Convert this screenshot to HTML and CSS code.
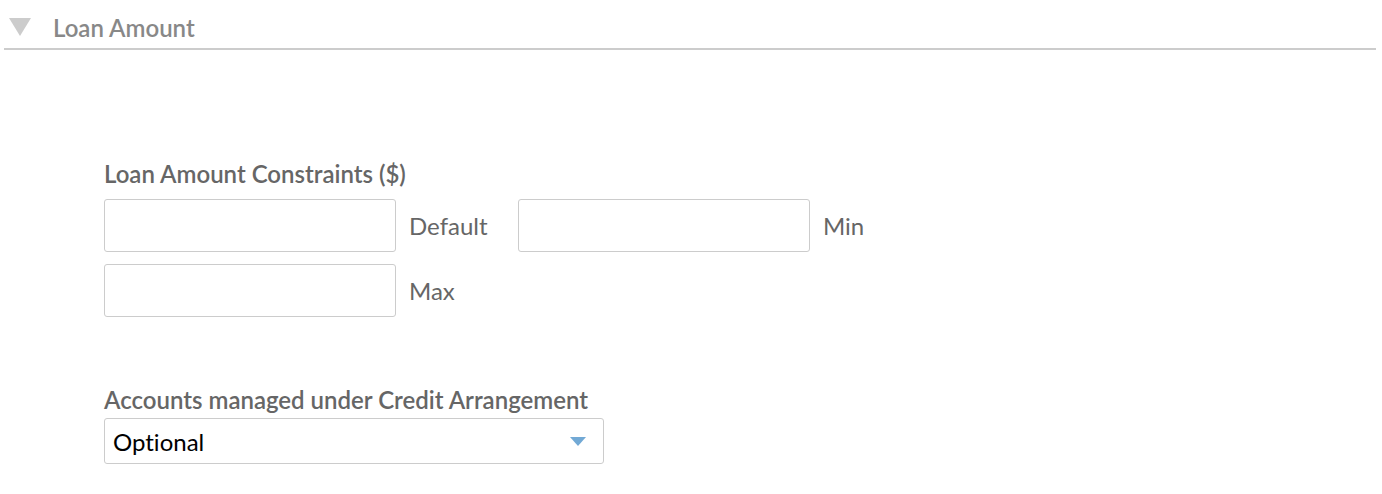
FILE: index.html
```html
<!DOCTYPE html>
<html lang="en">

<head>
    <meta charset="UTF-8">
    <title>Loan Amount</title>
    <link rel="stylesheet" href="styles.css">
</head>

<body>

    <div class="section-header">
        <span class="caret"></span>
        <span class="section-title">Loan Amount</span>
    </div>

    <div class="section-body">
        <div class="field-group">
            <label class="group-label">Loan Amount Constraints ($)</label>
            <div class="input-row">
                <div class="input-pair">
                    <input type="text" id="amount-default">
                    <label for="amount-default">Default</label>
                </div>
                <div class="input-pair">
                    <input type="text" id="amount-min">
                    <label for="amount-min">Min</label>
                </div>
            </div>
            <div class="input-row">
                <div class="input-pair">
                    <input type="text" id="amount-max">
                    <label for="amount-max">Max</label>
                </div>
            </div>
        </div>

        <div class="field-group select-group">
            <label class="group-label" for="credit-arrangement">Accounts managed under Credit Arrangement</label>
            <div class="select-box">
                <span id="credit-arrangement">Optional</span>
                <span class="select-arrow"></span>
            </div>
        </div>
    </div>

</body>

</html>
```

FILE: styles.css
```css
body {
    margin: 0;
    font-family: Lato, "Open Sans", sans-serif;
    font-variant-ligatures: none;
    background-color: #fff;
    color: #666;
}

/* Section header */
.section-header {
    display: flex;
    align-items: center;
    height: 50px;
    margin: 0 6px 0 4px;
    border-bottom: 2px solid #ccc;
    box-sizing: border-box;
    padding-top: 6px;
}

.caret {
    width: 0;
    height: 0;
    margin-left: 5px;
    border-left: 11px solid transparent;
    border-right: 11px solid transparent;
    border-top: 18px solid #ccc;
}

.section-title {
    margin-left: 22px;
    font-size: 24px;
    font-weight: 600;
    color: #888;
}

/* Body */
.section-body {
    padding: 110px 0 0 104px;
}

.group-label {
    display: block;
    font-size: 24px;
    font-weight: 600;
    color: #666;
    line-height: 28px;
    margin-bottom: 11px;
}

.input-row {
    display: flex;
    margin-bottom: 12px;
}

.input-pair {
    display: flex;
    align-items: center;
    width: 414px;
}

.input-pair input {
    width: 292px;
    height: 53px;
    box-sizing: border-box;
    border: 1px solid #ccc;
    border-radius: 3px;
    margin: 0;
    padding: 0 8px;
    font-family: inherit;
    font-size: 24px;
}

.input-pair label {
    margin-left: 13px;
    font-size: 24px;
    color: #666;
}

.select-group {
    margin-top: 69px;
}

.select-group .group-label {
    margin-bottom: 4px;
}

.select-box {
    display: flex;
    align-items: center;
    justify-content: space-between;
    width: 500px;
    height: 46px;
    box-sizing: border-box;
    border: 1px solid #ccc;
    border-radius: 3px;
    padding: 0 17px 0 8px;
    font-size: 24px;
    color: #000;
}

.select-arrow {
    width: 0;
    height: 0;
    border-left: 8px solid transparent;
    border-right: 8px solid transparent;
    border-top: 9px solid #72a9d5;
}
```
